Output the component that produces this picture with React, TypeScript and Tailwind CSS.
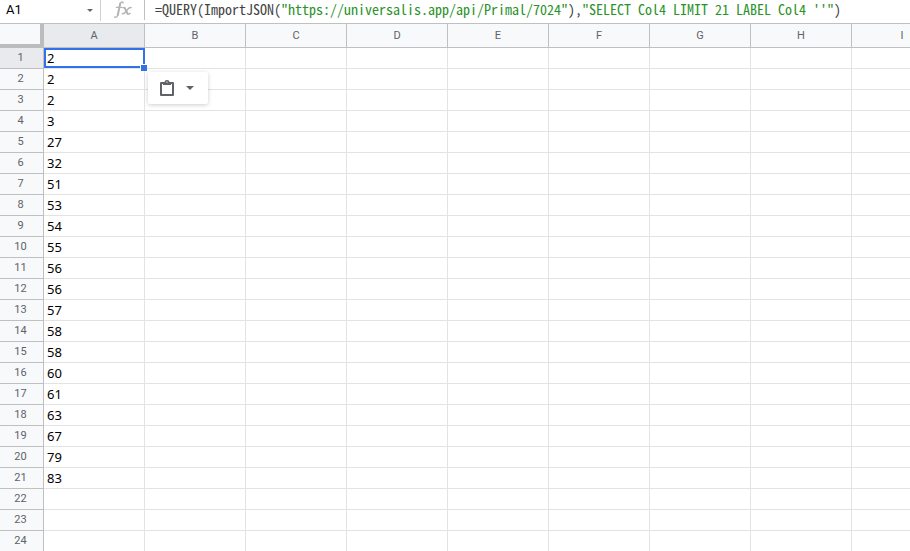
import React, { useState } from 'react';
import clsx from 'clsx';

const COLUMNS = ['A', 'B', 'C', 'D', 'E', 'F', 'G', 'H', 'I'];
const ROW_COUNT = 24;

const VALUES = [2, 2, 2, 3, 27, 32, 51, 53, 54, 55, 56, 56, 57, 58, 58, 60, 61, 63, 67, 79, 83];

const FORMULA = [
  { text: '=QUERY(ImportJSON(', string: false },
  { text: '"https://universalis.app/api/Primal/7024"', string: true },
  { text: '),', string: false },
  { text: '"SELECT Col4 LIMIT 21 LABEL Col4 \'\'"', string: true },
  { text: ')', string: false },
];

function FormulaBar() {
  const [cell, setCell] = useState('A1');

  return (
    <div className="flex h-6 items-start border-b border-[#c0c0c0] bg-white">
      <div className="flex h-[21px] w-[101px] shrink-0 items-start border-r border-[#d0d0d0]">
        <input
          aria-label="Name box"
          value={cell}
          onChange={(e) => setCell(e.target.value)}
          className="w-20 pl-1.5 font-['Roboto',sans-serif] text-[13px] leading-5 text-black outline-none"
        />
        <button aria-label="Named ranges" className="flex h-5 w-5 items-center justify-center">
          <svg width="6" height="3" viewBox="0 0 6 3" fill="#666">
            <path d="M0 0h6L3 3z" />
          </svg>
        </button>
      </div>
      <div className="flex h-5 w-11 shrink-0 items-center justify-center border-r border-[#c0c0c0]">
        <svg width="20" height="20" viewBox="0 0 20 20" fill="none" stroke="#b4b4b4" strokeLinecap="round">
          <path strokeWidth="2" d="M7.2 3.6L4.8 15" />
          <path strokeWidth="1.4" d="M10.2 2.8C9.2 1.4 7.6 2 7 4.4M4.8 14.8C4.2 17 3 17.8 1.6 17M3.4 7.4h5.6" />
          <path strokeWidth="2" d="M12 8.4l2.6 5.2" />
          <path strokeWidth="1.4" d="M10.2 7.8c1-.6 1.5-.2 2 .8M14.2 13.2c.5 1.2 1.4 1.2 2.8.2M18.2 7.6c-1.8-.6-3 .8-4.6 3-1.6 2.2-2.6 3.8-4.2 3" />
        </svg>
      </div>
      <div
        role="textbox"
        aria-label="Formula"
        contentEditable
        suppressContentEditableWarning
        spellCheck={false}
        className="flex-1 overflow-hidden pl-2.5 font-['Noto_Sans_Mono_CJK_SC','Liberation_Mono',monospace] text-sm leading-[18px] whitespace-pre text-[#444] outline-none"
      >
        {FORMULA.map((part) => (
          <span key={part.text} className={clsx(part.string && 'text-[#2a922a]')}>{part.text}</span>
        ))}
      </div>
    </div>
  );
}

function PasteOptions() {
  return (
    <button
      aria-label="Paste options"
      className="absolute top-6 left-[104px] z-20 flex h-8 w-[60px] items-center gap-2.5 rounded-xs bg-white pl-3 text-[#5f6368] shadow-[0_1px_4px_rgba(0,0,0,0.2)]"
    >
      <svg width="14" height="16" viewBox="0 0 14 16" fill="currentColor">
        <path fillRule="evenodd" d="M1 2h3.5a2.5 2 0 0 1 5 0H13a1 1 0 0 1 1 1v12a1 1 0 0 1-1 1H1a1 1 0 0 1-1-1V3a1 1 0 0 1 1-1zm1 2v10h10V4h-1v1H3V4zm5-2.6a.7.7 0 1 0 0 1.4.7.7 0 0 0 0-1.4z" />
      </svg>
      <svg width="8" height="4" viewBox="0 0 8 4" fill="currentColor" className="ml-0.5">
        <path d="M0 0h8L4 4z" />
      </svg>
    </button>
  );
}

function Selection() {
  return (
    <>
      <div className="pointer-events-none absolute inset-0 z-10 -mr-px border-2 border-[#3271e7]" />
      <div className="absolute -right-[3px] -bottom-[3px] z-10 h-[7px] w-[7px] cursor-crosshair border-t border-l border-white bg-[#3271e7]" />
    </>
  );
}

export default function App() {
  return (
    <div className="flex h-screen flex-col overflow-hidden bg-white font-['Roboto',sans-serif]">
      <FormulaBar />
      <div className="flex-1 overflow-hidden">
        <table className="w-[953px] table-fixed border-separate border-spacing-0">
          <colgroup>
            <col className="w-11" />
            {COLUMNS.map((col) => (
              <col key={col} className="w-[101px]" />
            ))}
          </colgroup>
          <thead>
            <tr className="h-6">
              <td className="border-r-4 border-b-4 border-[#bcbcbc] bg-[#f8f9fa] p-0" />
              {COLUMNS.map((col, i) => (
                <th
                  key={col}
                  scope="col"
                  className={clsx(
                    'border-r border-b border-[#c0c0c0] p-0 text-[11px] leading-5 font-normal text-[#5f6368]',
                    i === 0 ? 'bg-[#e8eaed]' : 'bg-[#f8f9fa]'
                  )}
                >
                  {col}
                </th>
              ))}
            </tr>
          </thead>
          <tbody>
            {Array.from({ length: ROW_COUNT }, (_, row) => (
              <tr key={row} className="h-[21px]">
                <th
                  scope="row"
                  className={clsx(
                    'border-r border-b border-[#c0c0c0] p-0 pr-0.5 align-top text-[11px] leading-5 font-normal text-[#5f6368]',
                    row === 0 ? 'bg-[#e8eaed]' : 'bg-[#f8f9fa]'
                  )}
                >
                  {row + 1}
                </th>
                {COLUMNS.map((col, i) => (
                  <td
                    key={col}
                    className="relative border-r border-b border-[#e2e3e3] p-0 pl-[3px] font-['Noto_Sans',sans-serif] text-[13px] leading-5 text-black"
                  >
                    {i === 0 && VALUES[row]}
                    {i === 0 && row === 0 && <Selection />}
                    {i === 0 && row === 0 && <PasteOptions />}
                  </td>
                ))}
              </tr>
            ))}
          </tbody>
        </table>
      </div>
    </div>
  );
}
